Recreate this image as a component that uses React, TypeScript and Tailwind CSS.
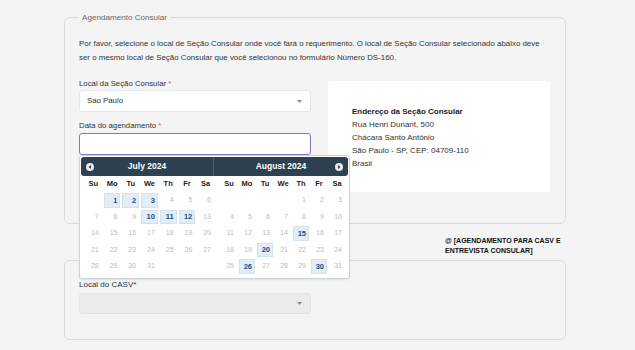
const july = {
  title: "July 2024",
  offset: 1,
  days: 31,
  marked: [1, 2, 3, 10, 11, 12],
};

const august = {
  title: "August 2024",
  offset: 4,
  days: 31,
  marked: [15, 20, 26, 30],
};

const weekDays = ["Su", "Mo", "Tu", "We", "Th", "Fr", "Sa"];

function Caret() {
  return (
    <svg width="5" height="3" viewBox="0 0 5 3" className="shrink-0">
      <path d="M0 0h5L2.5 3z" fill="#8a8a8a" />
    </svg>
  );
}

function NavIcon({ dir }: { dir: "prev" | "next" }) {
  return (
    <svg width="8" height="8" viewBox="0 0 8 8">
      <circle cx="4" cy="4" r="4" fill="#e8edf1" />
      {dir === "prev" ? (
        <path d="M5 2L2.5 4L5 6z" fill="#2d4150" />
      ) : (
        <path d="M3 2L5.5 4L3 6z" fill="#2d4150" />
      )}
    </svg>
  );
}

function Month({
  month,
  width,
}: {
  month: typeof july;
  width: string;
}) {
  const cells: (number | null)[] = [];
  for (let i = 0; i < month.offset; i++) cells.push(null);
  for (let d = 1; d <= month.days; d++) cells.push(d);

  return (
    <div className={`grid grid-cols-7 ${width}`}>
      {weekDays.map((w) => (
        <div
          key={w}
          className="h-[16px] flex items-center justify-center text-[7.5px] font-bold text-[#222]"
        >
          {w}
        </div>
      ))}
      {cells.map((d, i) => {
        if (d === null) return <div key={`e${i}`} className="h-[16.5px]" />;
        const on = month.marked.includes(d);
        return (
          <div key={d} className="h-[16.5px] p-[1px]">
            <div
              className={
                on
                  ? "h-full flex items-center justify-end pr-[2px] text-[7.5px] font-bold text-[#1d4f82] bg-[#e2edf7] border border-[#d3e2ef]"
                  : "h-full flex items-center justify-end pr-[3px] text-[7px] text-[#bcbcbc]"
              }
            >
              {d}
            </div>
          </div>
        );
      })}
    </div>
  );
}

function DatePicker() {
  return (
    <div className="absolute left-0 top-full w-[271px] h-[124px] bg-white border border-[#cdd3d8] rounded-[3px] p-[1px] shadow-[0_1px_2px_rgba(0,0,0,0.08)]">
      <div className="flex h-[19px] bg-[#2d4150] rounded-[3px] text-white text-[8.5px] font-bold">
        <div className="w-[133px] flex items-center px-[5px] border-r border-[#4b6374]">
          <NavIcon dir="prev" />
          <span className="flex-1 text-center pr-[8px]">{july.title}</span>
        </div>
        <div className="flex-1 flex items-center px-[5px]">
          <span className="flex-1 text-center pl-[8px]">{august.title}</span>
          <NavIcon dir="next" />
        </div>
      </div>
      <div className="flex pl-[3px]">
        <Month month={july} width="w-[131px]" />
        <div className="w-[5px]" />
        <Month month={august} width="w-[126px]" />
      </div>
    </div>
  );
}

export default function App() {
  return (
    <div className="min-h-[350px] bg-[#f4f4f4] font-['Liberation_Sans',Arial,sans-serif] pt-[12px] pl-[64px]">
      <div className="w-[502px]">
        {/* Agendamento */}
        <fieldset className="border border-[#d9d9d9] rounded-[6px] pl-[14px] pr-[15px] pt-[14px] pb-[31px]">
          <legend className="px-[3px] text-[8.1px] leading-[11px] text-[#666]">
            Agendamento Consular
          </legend>
          <p className="text-[7.9px] leading-[14px] text-[#333]">
            Por favor, selecione o local de Seção Consular onde você fará o
            requerimento. O local de Seção Consular selecionado abaixo deve ser
            o mesmo local de Seção Consular que você selecionou no formulário
            Número DS-160.
          </p>

          <div className="flex gap-[17px] mt-[13px]">
            <div className="w-[232px]">
              <label className="block text-[7.8px] leading-[12px] text-[#333]">
                Local da Seção Consular <span className="text-[#d9534f]">*</span>
              </label>
              <div className="h-[22px] bg-white border border-[#e6e6e6] rounded-[3px] flex items-center justify-between pl-[7px] pr-[8px] text-[7.8px] text-[#333]">
                <span>Sao Paulo</span>
                <Caret />
              </div>
              <label className="block mt-[8px] text-[7.8px] leading-[12px] text-[#333]">
                Data do agendamento <span className="text-[#d9534f]">*</span>
              </label>
              <div className="relative mt-[1px] z-10">
                <div className="h-[22px] bg-white border border-[#8479c9] rounded-[3px]" />
                <DatePicker />
              </div>
            </div>

            <div className="mt-[3px] w-[222px] h-[111px] bg-white rounded-[3px] pl-[24px] pt-[24px] text-[8px] leading-[13px] text-[#333]">
              <p className="font-bold text-[#222]">Endereço da Seção Consular</p>
              <p>Rua Henri Dunant, 500</p>
              <p>Chácara Santo Antônio</p>
              <p>São Paulo - SP, CEP: 04709-110</p>
              <p>Brasil</p>
            </div>
          </div>
        </fieldset>

        <div className="flex justify-end mt-[12px]">
          <p className="w-[121px] whitespace-nowrap text-[7px] leading-[10px] font-bold text-[#111] uppercase">
            @ [Agendamento para CASV e
            <br />
            Entrevista Consular]
          </p>
        </div>

        {/* CASV */}
        <fieldset className="mt-[4px] border border-[#d9d9d9] rounded-[6px] pl-[14px] pr-[15px] pt-[17px] pb-[25px]">
          <label className="block text-[8px] leading-[14px] text-[#333]">
            Local do CASV*
          </label>
          <div className="mt-[1px] w-[232px] h-[21px] bg-[#ebebeb] border border-[#e3e3e3] rounded-[3px] flex items-center justify-end pr-[8px]">
            <Caret />
          </div>
        </fieldset>
      </div>
    </div>
  );
}
